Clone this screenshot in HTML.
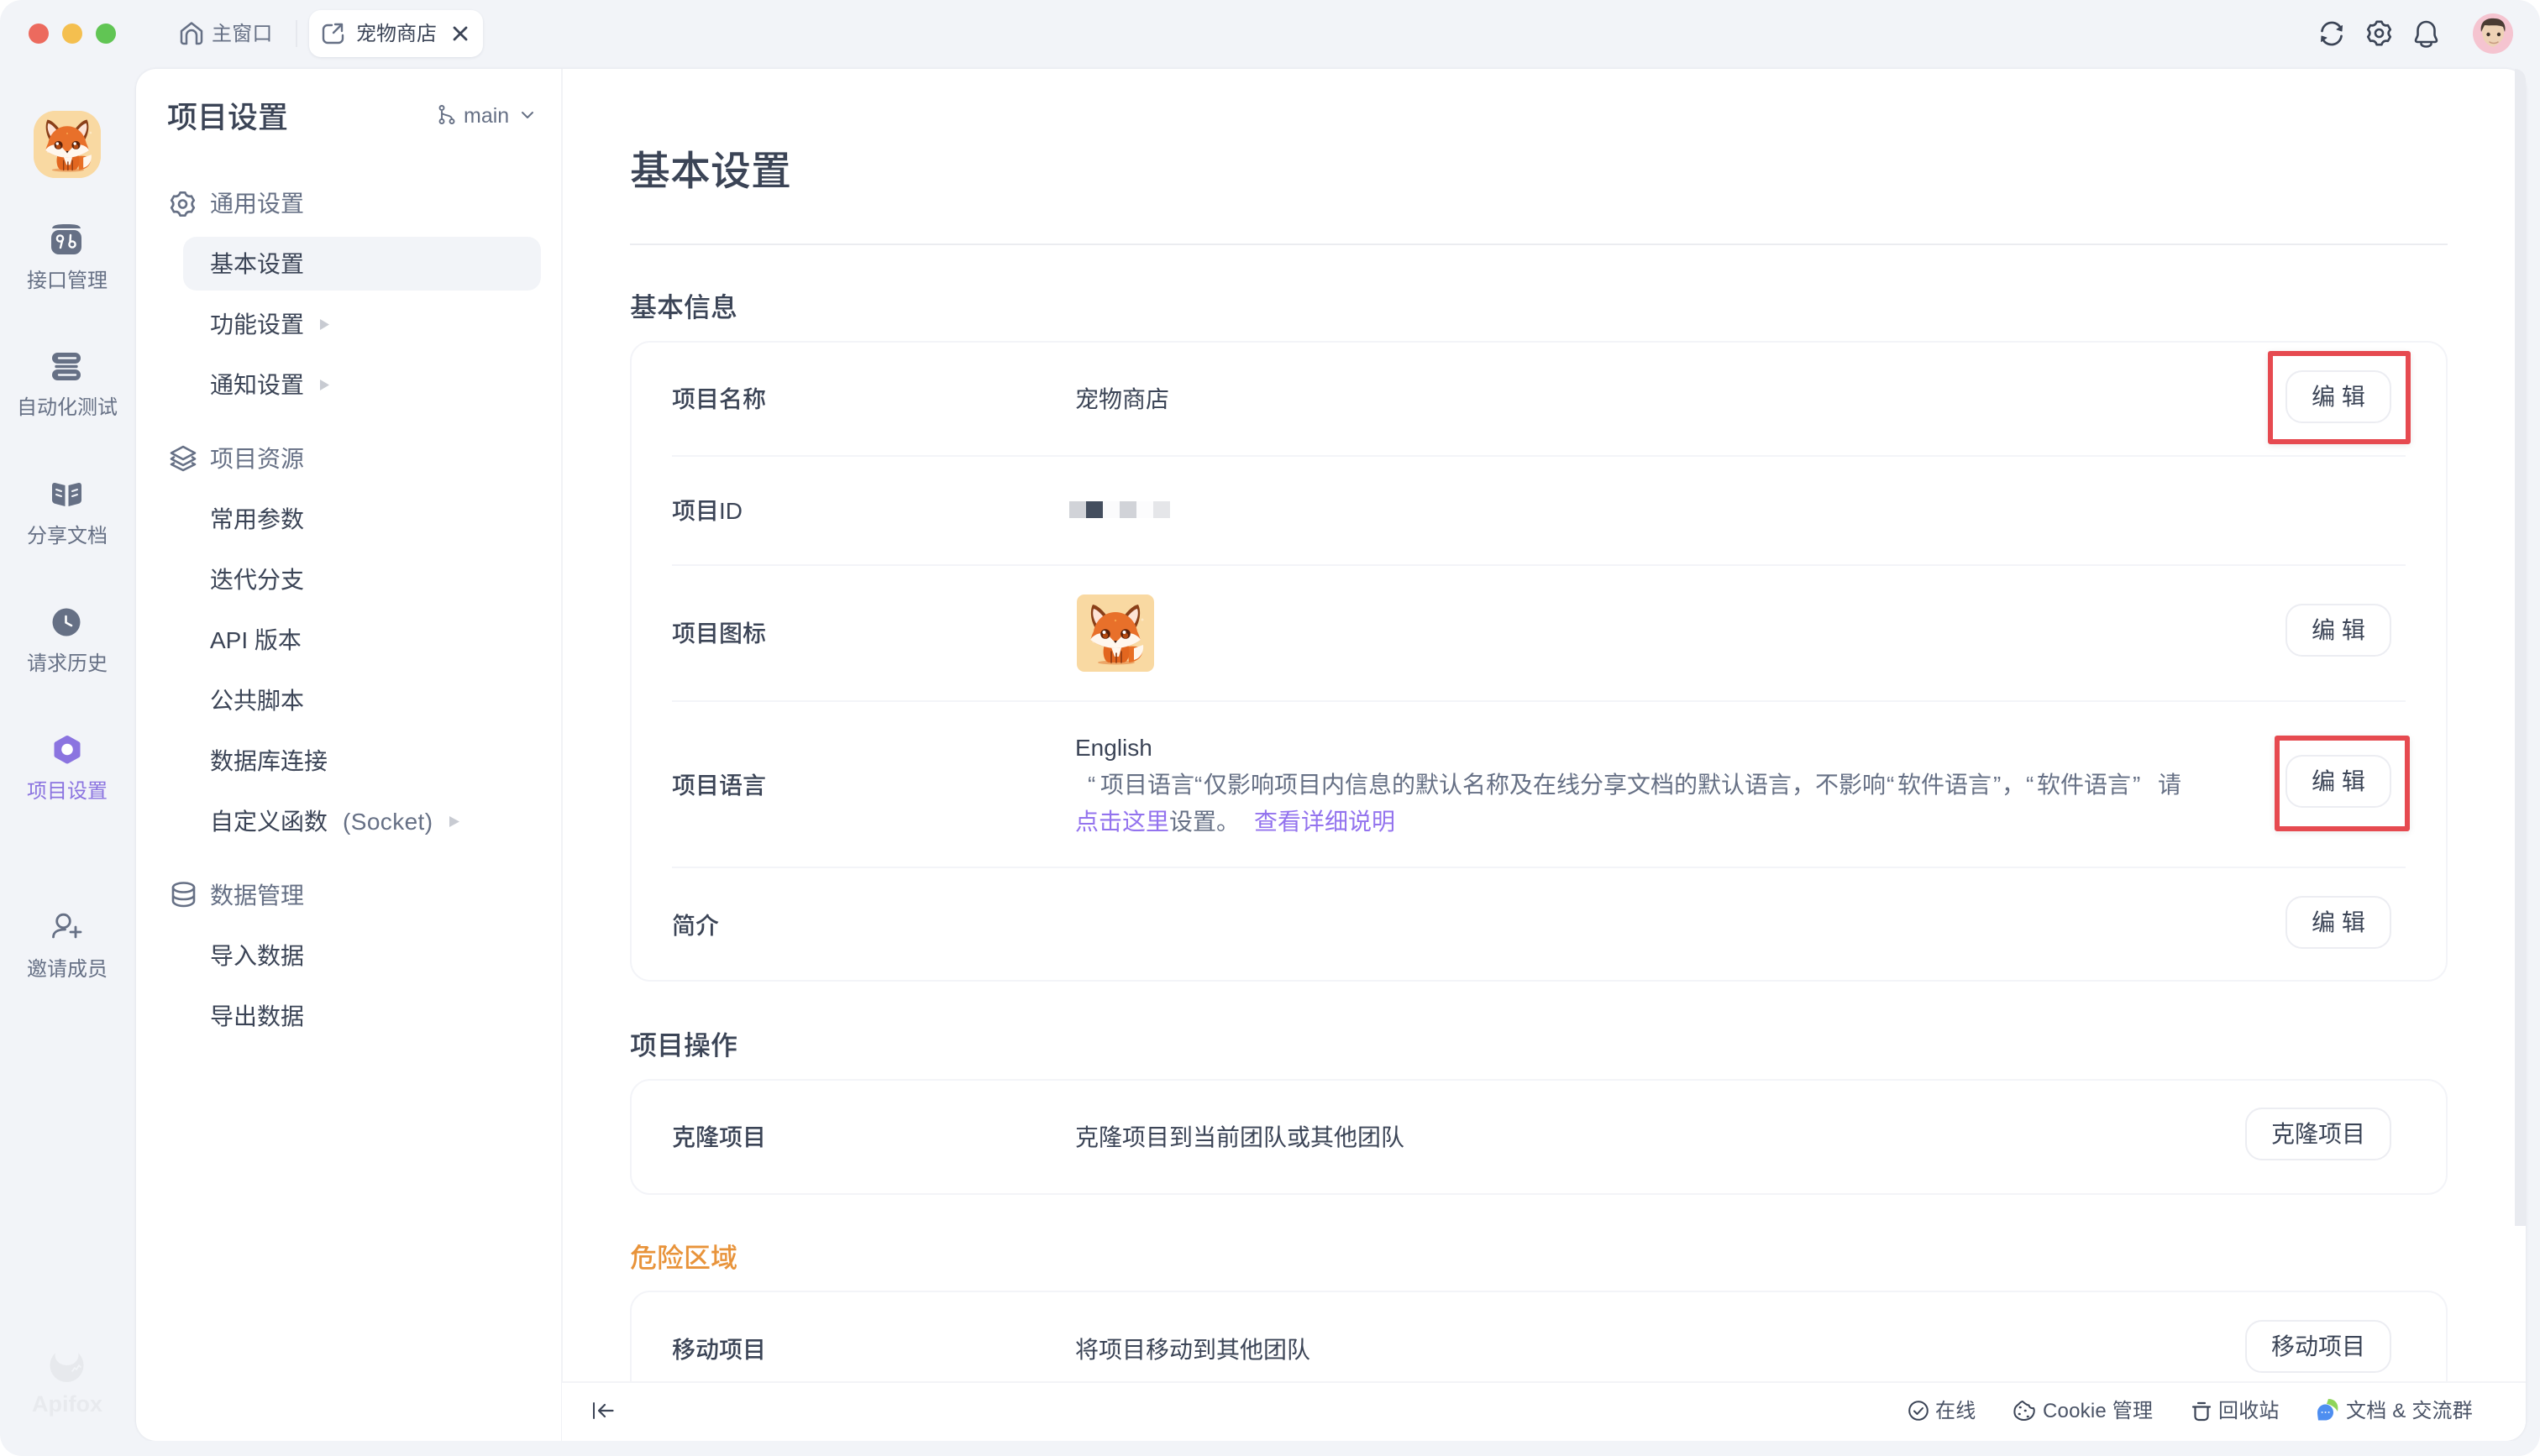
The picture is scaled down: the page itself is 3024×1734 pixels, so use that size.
<!DOCTYPE html>
<html lang="zh-CN"><head><meta charset="utf-8"><title>项目设置</title>
<style>
*{box-sizing:border-box}
html,body{margin:0;padding:0;width:3024px;height:1734px;overflow:hidden;background:#fff}
body{font-family:"Liberation Sans","Noto Sans CJK SC",sans-serif;color:#3b4456;position:relative}
#win{position:absolute;left:0;top:0;width:3024px;height:1734px;background:#f2f4f8;border-radius:26px;overflow:hidden}
#panel{position:absolute;left:162px;top:82px;width:2845px;height:1634px;background:#fff;border-radius:24px;box-shadow:0 0 3px rgba(40,50,80,.10);overflow:hidden}
.t{position:absolute;white-space:nowrap;line-height:40px;font-size:28px;margin-top:1px}
.n{font-size:24px;color:#667085;width:160px;left:0;text-align:center;margin-top:2px}
.g{color:#667085;left:250px}
.i{left:250px;color:#3b4456}
.l{left:800px;font-weight:500;color:#3b4456}
.v{left:1281px;color:#3b4456}
.d{color:#667085;top:914px}
.h{left:750px;font-size:32px;font-weight:500;color:#3b4456}
.f{font-size:24px;color:#4a5366;letter-spacing:.2px}
.card{position:absolute;left:750px;width:2164px;border:2px solid #f3f4f8;border-radius:24px;background:#fff}
.sep{position:absolute;left:800px;width:2064px;height:2px;background:#f3f4f8}
.btn{position:absolute;height:63px;border:2px solid #ecedf2;border-radius:20px;background:#fff;font-size:28px;line-height:60px;text-align:center;color:#3b4456;white-space:nowrap}
.red{position:absolute;border:6px solid #e64a50;border-radius:3px;box-shadow:0 2px 8px rgba(0,0,0,.08)}
.b{position:absolute;top:597px;height:20px;width:20px}
a{color:#9373ee;text-decoration:none}
#foot{position:absolute;left:669px;top:1645px;width:2338px;height:71px;background:#fff;border-top:2px solid #f3f4f7;border-bottom-right-radius:24px}
svg{position:absolute;left:0;top:0}
</style></head><body>
<div id="win">
<div id="panel"></div>
<div style="position:absolute;left:668px;top:82px;width:2px;height:1634px;background:#f1f2f6"></div>
<div style="position:absolute;left:2994px;top:82px;width:13px;height:1378px;background:#e9ebf0;border-top-right-radius:16px"></div>

<div style="position:absolute;left:34px;top:28px;width:24px;height:24px;border-radius:50%;background:#ec6a5e"></div>
<div style="position:absolute;left:74px;top:28px;width:24px;height:24px;border-radius:50%;background:#f4bf4f"></div>
<div style="position:absolute;left:114px;top:28px;width:24px;height:24px;border-radius:50%;background:#61c554"></div>
<div class="t f" style="left:252px;top:20px;color:#667085">主窗口</div>
<div style="position:absolute;left:352px;top:24px;width:2px;height:32px;background:#e6e8ee"></div>
<div style="position:absolute;left:368px;top:12px;width:207px;height:56px;background:#fff;border-radius:14px;box-shadow:0 1px 3px rgba(40,50,80,.10)"></div>
<div class="t f" style="left:424px;top:20px;color:#3b4456;letter-spacing:0">宠物商店</div>

<div class="t n" style="top:313px">接口管理</div>
<div class="t n" style="top:464px">自动化测试</div>
<div class="t n" style="top:617px">分享文档</div>
<div class="t n" style="top:769px">请求历史</div>
<div class="t n" style="top:921px;color:#8b74e0">项目设置</div>
<div class="t n" style="top:1133px">邀请成员</div>
<div class="t" style="left:0;width:160px;text-align:center;top:1651px;font-size:27px;font-weight:700;color:#e8eaee">Apifox</div>

<div class="t" style="left:199px;top:119px;font-size:36px;font-weight:500;color:#3b4456">项目设置</div>
<div class="t" style="left:552px;top:117px;font-size:25px;color:#667085">main</div>

<div class="t g" style="top:222px">通用设置</div>
<div style="position:absolute;left:218px;top:282px;width:426px;height:64px;background:#f2f4f8;border-radius:16px"></div>
<div class="t i" style="top:294px">基本设置</div>
<div class="t i" style="top:366px">功能设置</div>
<div class="t i" style="top:438px">通知设置</div>
<div class="t g" style="top:526px">项目资源</div>
<div class="t i" style="top:598px">常用参数</div>
<div class="t i" style="top:670px">迭代分支</div>
<div class="t i" style="top:742px">API 版本</div>
<div class="t i" style="top:814px">公共脚本</div>
<div class="t i" style="top:886px">数据库连接</div>
<div class="t i" style="top:958px">自定义函数<span style="color:#667085;margin-left:18px;letter-spacing:.4px">(Socket)</span></div>
<div class="t g" style="top:1046px">数据管理</div>
<div class="t i" style="top:1118px">导入数据</div>
<div class="t i" style="top:1190px">导出数据</div>

<div class="t" style="left:750px;top:174px;font-size:48px;line-height:60px;font-weight:500;color:#3b4456">基本设置</div>
<div style="position:absolute;left:750px;top:290px;width:2164px;height:2px;background:#ebecf0"></div>

<div class="t h" style="top:345px">基本信息</div>
<div class="card" style="top:406px;height:763px"></div>
<div class="sep" style="top:542px"></div>
<div class="sep" style="top:672px"></div>
<div class="sep" style="top:834px"></div>
<div class="sep" style="top:1032px"></div>
<div class="t l" style="top:455px">项目名称</div>
<div class="t v" style="top:455px;left:1280px">宠物商店</div>
<div class="t l" style="top:588px">项目ID</div>
<div class="b" style="left:1273px;background:#d1d3d8"></div>
<div class="b" style="left:1293px;background:#444e5e"></div>
<div class="b" style="left:1313px;background:#fbfbfc"></div>
<div class="b" style="left:1333px;background:#d1d3d8"></div>
<div class="b" style="left:1353px;background:#fcfcfd"></div>
<div class="b" style="left:1373px;background:#e5e6e9"></div>
<div class="t l" style="top:734px">项目图标</div>
<div class="t l" style="top:915px">项目语言</div>
<div class="t v" style="top:870px;left:1280px">English</div>

<div class="t d" style="left:1295px">“</div>
<div class="t d" style="left:1310px">项目语言</div>
<div class="t d" style="left:1422px">“</div>
<div class="t d" style="left:1433px">仅影响项目内信息的默认名称及在线分享文档的默认语言，不影响</div>
<div class="t d" style="left:2246px">“</div>
<div class="t d" style="left:2259px">软件语言</div>
<div class="t d" style="left:2373px">”</div>
<div class="t d" style="left:2383px">，</div>
<div class="t d" style="left:2412px">“</div>
<div class="t d" style="left:2425px">软件语言</div>
<div class="t d" style="left:2539px">”</div>
<div class="t d" style="left:2569px">请</div>
<div class="t v" style="top:958px;left:1280px;color:#667085"><a>点击这里</a>设置。<a style="margin-left:17px">查看详细说明</a></div>
<div class="t l" style="top:1082px">简介</div>

<div class="btn" style="left:2721px;top:441px;width:126px">编 辑</div>
<div class="btn" style="left:2721px;top:719px;width:126px">编 辑</div>
<div class="btn" style="left:2721px;top:899px;width:126px">编 辑</div>
<div class="btn" style="left:2721px;top:1067px;width:126px">编 辑</div>
<div class="red" style="left:2700px;top:418px;width:170px;height:111px"></div>
<div class="red" style="left:2708px;top:876px;width:161px;height:114px"></div>

<div class="t h" style="top:1224px">项目操作</div>
<div class="card" style="top:1285px;height:138px"></div>
<div class="t l" style="top:1334px">克隆项目</div>
<div class="t v" style="top:1334px;left:1280px">克隆项目到当前团队或其他团队</div>
<div class="btn" style="left:2673px;top:1319px;width:174px">克隆项目</div>

<div class="t h" style="top:1477px;color:#e8933a">危险区域</div>
<div class="card" style="top:1537px;height:200px"></div>
<div class="t l" style="top:1587px">移动项目</div>
<div class="t v" style="top:1587px;left:1280px">将项目移动到其他团队</div>
<div class="btn" style="left:2673px;top:1572px;width:174px">移动项目</div>

<div id="foot"></div>
<div style="position:absolute;left:162px;top:1716px;width:2845px;height:18px;background:#f2f4f8"></div>
<div style="position:absolute;left:2304px;top:1660px" class="t f">在线</div>
<div style="position:absolute;left:2432px;top:1660px" class="t f">Cookie 管理</div>
<div style="position:absolute;left:2641px;top:1660px" class="t f">回收站</div>
<div style="position:absolute;left:2793px;top:1660px" class="t f">文档 &amp; 交流群</div>

<svg width="3024" height="1734" viewBox="0 0 3024 1734" fill="none" stroke-linecap="round" stroke-linejoin="round">
<defs>
<clipPath id="lc"><rect x="40" y="132" width="80" height="80" rx="26"/></clipPath>
<path id="gear" d="M-2.9-13.7L2.9-13.7Q4.6-8 10.4-9.4L13.3-4.3Q9 0 13.3 4.300L10.4 9.4Q4.6 8 2.9 13.7L-2.9 13.7Q-4.6 8-10.4 9.4L-13.3 4.3Q-9 0-13.3-4.3L-10.4-9.4Q-4.6-8-2.9-13.7Z"/>
<g id="fox">
<rect width="92" height="92" rx="9" fill="#f9d9a2"/>
<circle cx="20" cy="56" r="1.5" fill="#fde9c4"/><circle cx="78" cy="30" r="1.5" fill="#fde9c4"/>
<ellipse cx="47" cy="81" rx="22" ry="2.5" fill="#eca566"/>
<path d="M60 62C74 60 80 66 78 62C80 72 74 80 62 81Z" fill="#e86f25"/>
<path d="M68 64L79 60C80 68 76 76 68 78Z" fill="#fff7ee"/>
<path d="M33 60H61C64 68 62 80 56 81H38C32 80 30 68 33 60Z" fill="#e2661f"/>
<path d="M40 60H54L50 74H45Z" fill="#fff7ee"/>
<path d="M41 68V81M47 70V81M53 68V81" stroke="#8c3a12" stroke-width="1.6"/>
<path d="M19 12C15 20 17 32 22 40L37 27C31 19 25 13 19 12Z" fill="#8a3f18"/>
<path d="M20 17C18 23 20 30 24 36L33 28C28 22 24 18 20 17Z" fill="#fde3d6"/>
<path d="M73 12C77 20 75 32 70 40L55 27C61 19 67 13 73 12Z" fill="#8a3f18"/>
<path d="M72 17C74 23 72 30 68 36L59 28C64 22 68 18 72 17Z" fill="#fde3d6"/>
<path d="M46 21C60 21 70 32 72 44C75 50 75 53 76 54C68 60 56 64 46 64C36 64 24 60 16 54C17 53 17 50 20 44C22 32 32 21 46 21Z" fill="#e8702a"/>
<path d="M16 54C20 47 30 44 36 48C40 50 43 56 46 56C49 56 52 50 56 48C62 44 72 47 76 54C68 60 56 64 46 64C36 64 24 60 16 54Z" fill="#fff7ee"/>
<circle cx="34" cy="47" r="5.8" fill="#5a210a"/><circle cx="58" cy="47" r="5.8" fill="#5a210a"/>
<circle cx="34" cy="49" r="3.2" fill="#b44a12"/><circle cx="58" cy="49" r="3.2" fill="#b44a12"/>
<circle cx="32.5" cy="45" r="2" fill="#fff"/><circle cx="56.5" cy="45" r="2" fill="#fff"/>
<path d="M44 55H48L46 58Z" fill="#3a1508"/>
<circle cx="46" cy="31" r="1.2" fill="#f9a24a"/>
</g>
</defs>

<g clip-path="url(#lc)"><rect x="40" y="132" width="80" height="80" fill="#f9d9a2"/><use href="#fox" transform="translate(40 132) scale(.87)"/></g>
<use href="#fox" transform="translate(1282 708)"/>

<!-- top left -->
<path d="M216 50V37L228 27.5L240 37V49a3 3 0 0 1-3 3H234V42a6 6 0 0 0-12 0V52H219a3 3 0 0 1-3-2z" stroke="#667085" stroke-width="2.5"/>
<path d="M395 30H390a5 5 0 0 0-5 5V46a5 5 0 0 0 5 5H403a5 5 0 0 0 5-5V42" stroke="#667085" stroke-width="2.4"/>
<path d="M397 39L407 29M399 29H407V37" stroke="#667085" stroke-width="2.4"/>
<path d="M541 33L555 47M555 33L541 47" stroke="#3b4456" stroke-width="2.8"/>

<!-- left nav -->
<path d="M62 272c1-4 6-5 17-5s16 1 17 5z" fill="#667085"/>
<rect x="61" y="274" width="36" height="29" rx="9" fill="#667085"/>
<circle cx="71.5" cy="284" r="3.6" stroke="#fff" stroke-width="2.4"/><path d="M74 287L72 295" stroke="#fff" stroke-width="2.4"/>
<circle cx="86" cy="291" r="3.6" stroke="#fff" stroke-width="2.4"/><path d="M84 280L83.5 288" stroke="#fff" stroke-width="2.4"/>

<g transform="translate(-1 0)">
<rect x="63" y="420" width="34" height="13" rx="6.5" fill="#667085"/>
<path d="M71 426.5H91" stroke="#f2f4f8" stroke-width="2.4"/>
<path d="M68 436.5H92" stroke="#667085" stroke-width="3.4"/>
<rect x="63" y="440" width="34" height="13" rx="6.5" fill="#667085"/>
<path d="M71 446.5H91" stroke="#f2f4f8" stroke-width="2.4"/>
</g>

<g transform="translate(-2 0)">
<path d="M64 578a3 3 0 0 1 3.5-3L79.5 578V603L68 600a5 5 0 0 1-4-4z" fill="#667085"/>
<path d="M99 578a3 3 0 0 0-3.500-3L83.500 578V603L95 600a5 5 0 0 0 4-4z" fill="#667085"/>
<path d="M69 583L75 585M69 589L75 591M88 585L94 583M88 591L94 589" stroke="#f2f4f8" stroke-width="2"/>
<circle cx="81" cy="741" r="16.5" fill="#667085"/>
<path d="M80.500 734V741.500L87 745" stroke="#fff" stroke-width="2.6"/>
<path d="M82 879L94.500 886V899.500L82 906.500L69.500 899.500V886Z" fill="#8b74e0" stroke="#8b74e0" stroke-width="6"/>
<circle cx="82" cy="892.500" r="6.800" fill="#fff"/>
</g>

<g transform="translate(-1 -1)">
<circle cx="76.500" cy="1098" r="7.800" stroke="#667085" stroke-width="2.800"/>
<path d="M64.500 1117c0-6 5-9 14-9" stroke="#667085" stroke-width="2.800"/>
<path d="M85 1111H97M91 1105V1117" stroke="#667085" stroke-width="2.800"/>
</g>

<g transform="translate(-1 -3)">
<circle cx="80.500" cy="1629" r="20" fill="#e7e9ed"/>
<ellipse cx="80.500" cy="1617" rx="14" ry="12" fill="#f2f4f8"/>
<path d="M87 1636l3-4 2 2 3-5 2 2" stroke="#f2f4f8" stroke-width="1.600"/>
</g>

<!-- second col icons -->
<path d="M523.500 128.500a2.500 2.500 0 1 0 5 0a2.500 2.500 0 1 0-5 0M523.500 144.500a2.500 2.500 0 1 0 5 0a2.500 2.500 0 1 0-5 0M535.500 144.500a2.500 2.500 0 1 0 5 0a2.500 2.500 0 1 0-5 0M526 131V142M526 134c0 4 12 2 12 8" stroke="#667085" stroke-width="1.900"/>
<path d="M622 134L628 140L634 134" stroke="#667085" stroke-width="2"/>

<g transform="translate(217.500 243)" stroke="#667085" stroke-width="2.600"><use href="#gear"/><circle r="4.500"/></g>
<g transform="translate(-3 0)" stroke="#667085" stroke-width="2.600">
<path d="M221 532L235 539.500L221 547L207 539.500Z"/>
<path d="M210 544.500L207 546.500L221 554L235 546.500L232 544.500M210 551.500L207 553L221 560L235 553L232 551.500"/>
<ellipse cx="221.500" cy="1057" rx="12.500" ry="5.500"/>
<path d="M209 1057V1073c0 3 5 6 12.500 6s12.500-3 12.500-6V1057M209 1066c0 3 5 5 12.500 5s12.500-2 12.500-5"/>
</g>
<path d="M381 380L392 386.500L381 393Z" fill="#c8cbd2"/>
<path d="M381 452L392 458.500L381 465Z" fill="#c8cbd2"/>
<path d="M535 972L547 978.500L535 985Z" fill="#c8cbd2"/>

<!-- top right -->
<path d="M2764.500 37a11.800 11.800 0 0 1 21-5.500M2787.500 43a11.800 11.800 0 0 1-21 5.500" stroke="#3b4456" stroke-width="2.700"/>
<path d="M2788.500 30.500L2788 37L2782 35ZM2763.500 49.500L2764 43L2770 45Z" fill="#3b4456" stroke="#3b4456" stroke-width="1"/>
<g transform="translate(2832.500 39.500)" stroke="#3b4456" stroke-width="2.600"><use href="#gear"/><circle r="4.500"/></g>
<path d="M2888.500 26a10 10 0 0 0-10 10v5c0 3-2.500 5-2.500 7c0 1.500 1 2 2 2h21c1 0 2-.5 2-2c0-2-2.500-4-2.500-7v-5a10 10 0 0 0-10-10z" stroke="#3b4456" stroke-width="2.600"/>
<path d="M2882.500 52a6 3.500 0 0 0 12 0" stroke="#3b4456" stroke-width="2.600"/>

<circle cx="2968" cy="40" r="24" fill="#f5c4d0"/>
<path d="M2955 35C2955 24 2962 22 2969 22C2977 22 2982 26 2981 36C2982 42 2980 50 2968 56C2957 52 2955 44 2955 35Z" fill="#eed2b6"/>
<path d="M2954 38C2952 26 2960 21 2970 22C2980 22 2984 30 2982 38L2980 32C2974 29 2964 31 2958 30Z" fill="#4a3b33"/>
<circle cx="2962.500" cy="41" r="2.200" fill="#3a2f2a"/><circle cx="2975" cy="41" r="2.200" fill="#3a2f2a"/>
<path d="M2964 50C2967 52 2971 52 2974 50" stroke="#c89a80" stroke-width="1.500"/>

<!-- footer -->
<path d="M707 1671V1689" stroke="#3b4456" stroke-width="2"/>
<path d="M729.500 1680H713M720 1673L713 1680L720 1687" stroke="#3b4456" stroke-width="2.200"/>
<circle cx="2284" cy="1680" r="10.800" stroke="#3b4456" stroke-width="2"/>
<path d="M2279 1680.500l3.500 3.500l6.500-7" stroke="#3b4456" stroke-width="2"/>
<path d="M2409 1669c-3 .5-4 3-5.500 4s-4 3-4 7c-.5 4 1 7 3 8c2 2 5 3 8 3c4.500 0 9-2 11-6c1.500-3 1.500-6 .5-8c-3 .5-5-1-5.500-3.500c-3 0-5-2.500-7.500-4.500z" stroke="#3b4456" stroke-width="2" transform="translate(-1 0)"/>
<path d="M2405 1676h.5M2404 1684h.5M2411 1680h.5M2414 1687h.5" stroke="#3b4456" stroke-width="2.600"/>
<path d="M2617 1671H2625M2611 1675.500H2631" stroke="#3b4456" stroke-width="2.200"/>
<path d="M2613.500 1676V1687a4 4 0 0 0 4 4H2624.500a4 4 0 0 0 4-4V1676" stroke="#3b4456" stroke-width="2.200"/>
<g transform="translate(0 -2)">
<path d="M2772 1668C2780 1668 2785 1674 2783 1683C2781 1679 2776 1675 2770 1674Z" fill="#8fd45a"/>
<path d="M2759 1684a9.500 9.500 0 0 1 19 0c0 6-5 9.500-9.500 9.500H2760C2760 1692 2759 1688 2759 1684Z" fill="#4e8ef0"/>
<path d="M2764.500 1684h.2M2768.500 1684h.2M2772.500 1684h.2" stroke="#fff" stroke-width="1.800"/>
</g>
</svg>
</div>
</body></html>
